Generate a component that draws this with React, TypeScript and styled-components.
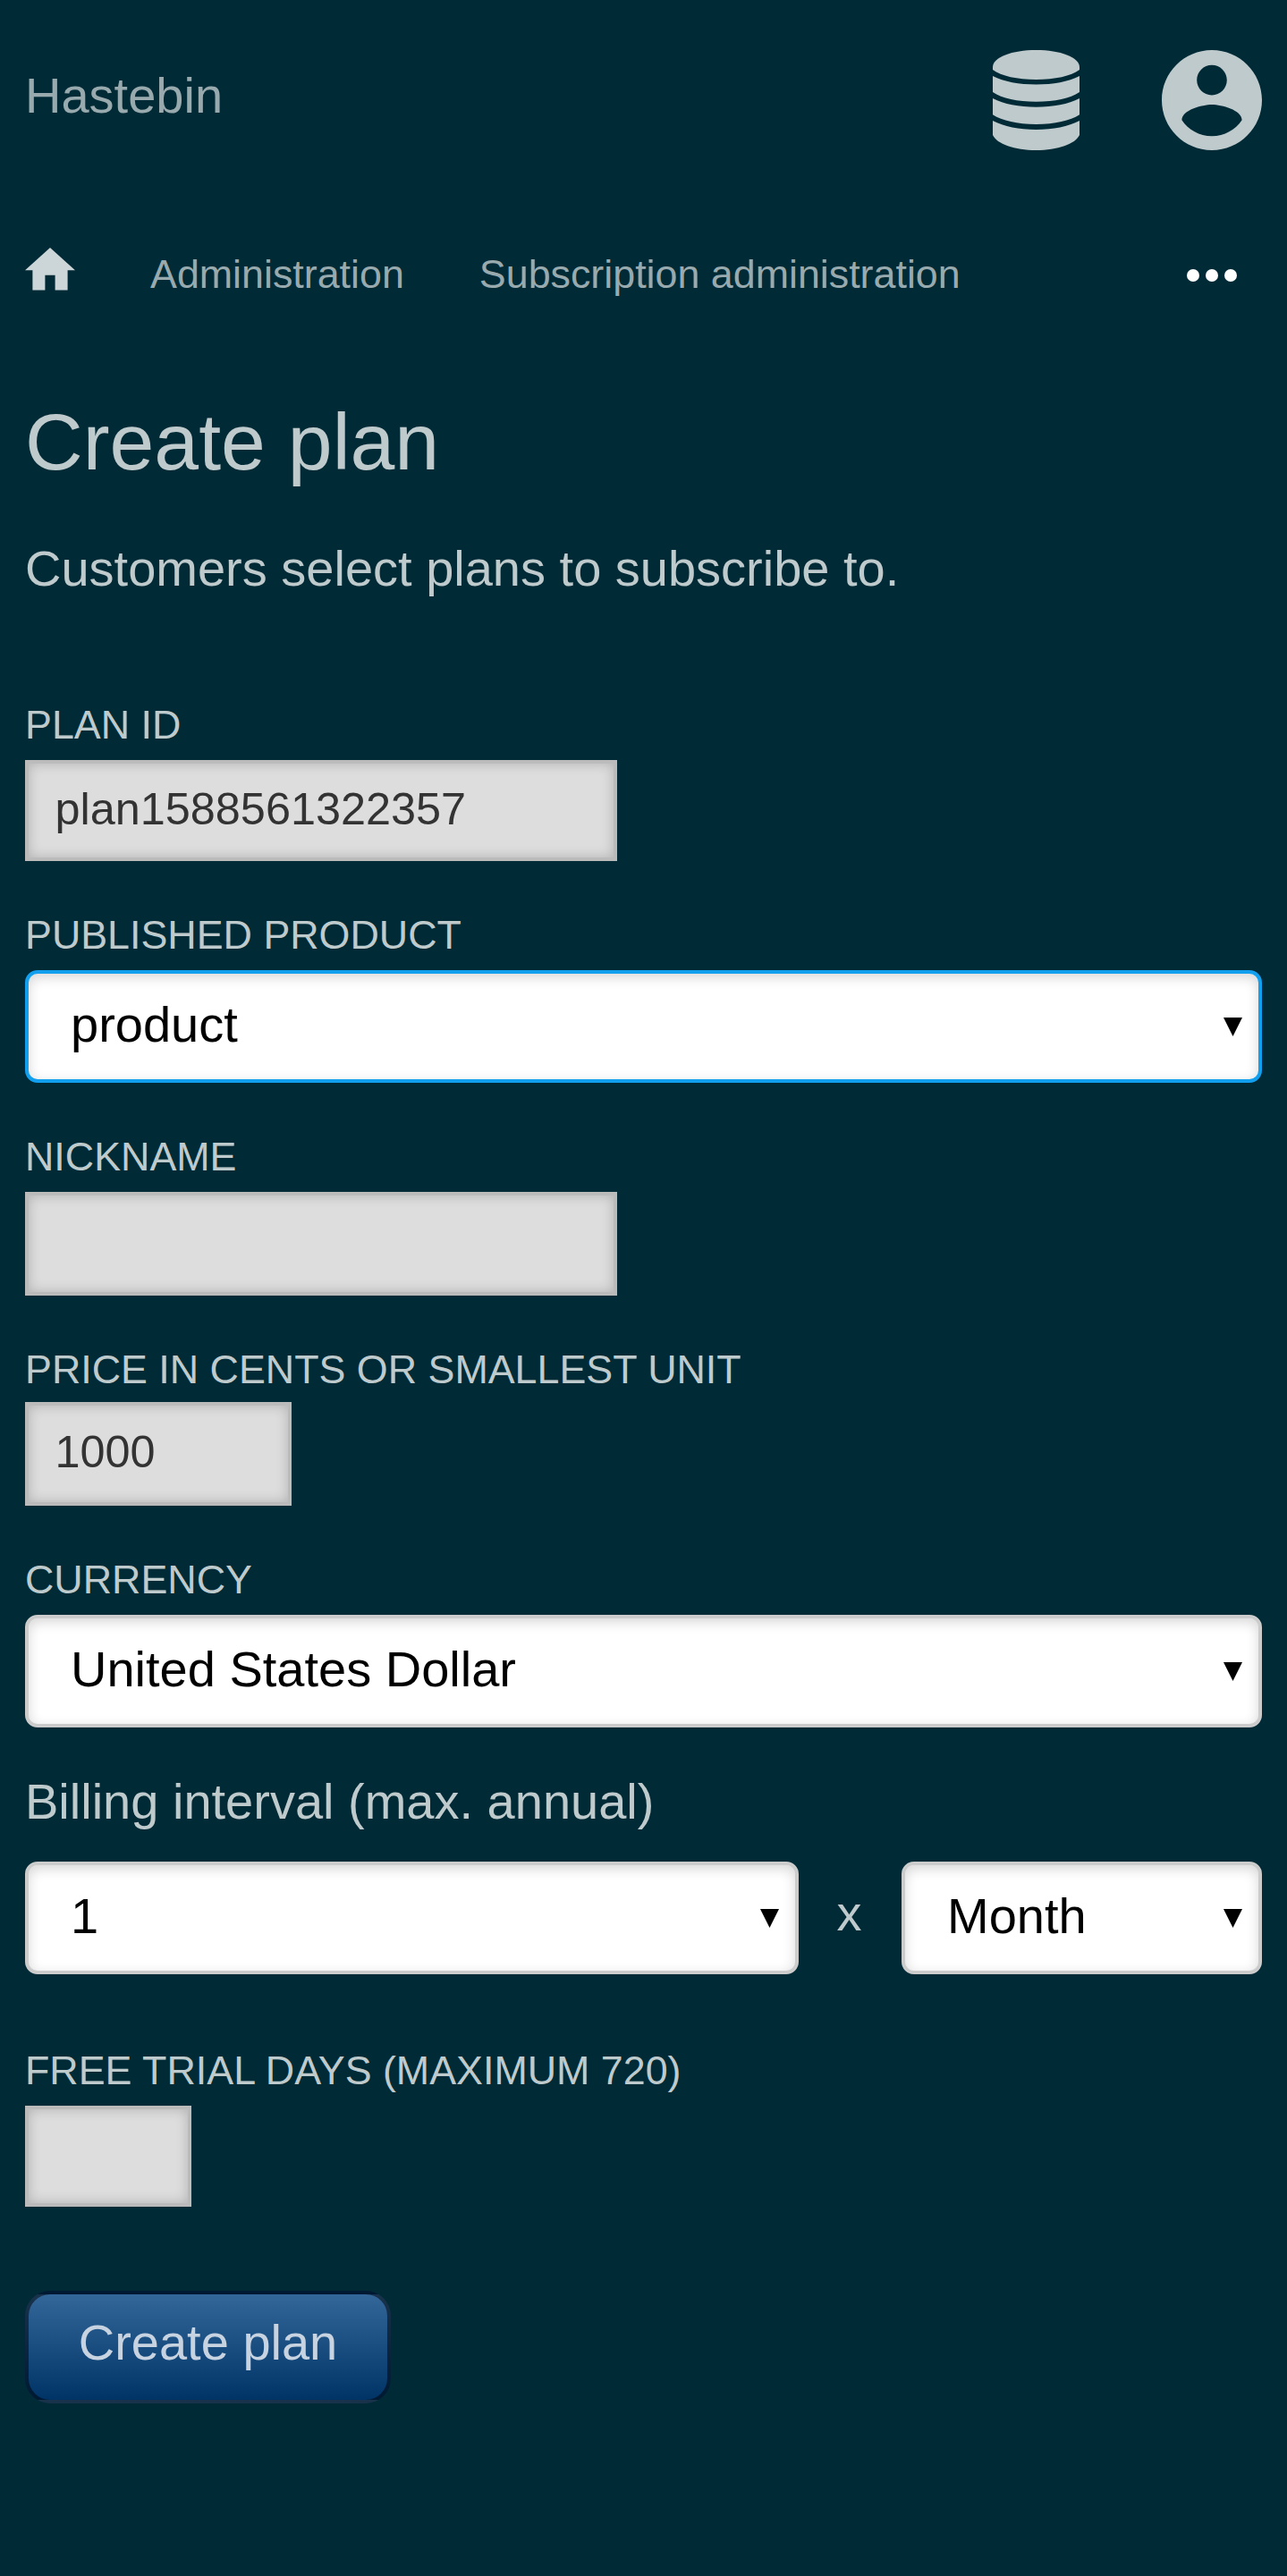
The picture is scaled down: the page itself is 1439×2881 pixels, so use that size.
import React from "react";
import styled, { createGlobalStyle, css } from "styled-components";

const GlobalStyle = createGlobalStyle`
  *, *::before, *::after { box-sizing: border-box; }
  html, body { margin: 0; background: #002b36; }
  body {
    min-height: 2881px;
    color: #bfcacd;
    font: 56px/64px "Liberation Sans", Arial, sans-serif;
  }
`;

const Page = styled.div`
  display: flex;
  flex-direction: column;
  padding: 56px 28px 0;
`;

const Header = styled.header`
  display: flex;
  justify-content: space-between;
  height: 112px;
`;

const Brand = styled.a`
  color: #99aaaf;
  line-height: 101px;
`;

const HeaderIcons = styled.div`
  display: flex;
  gap: 92px;
`;

const Icon = styled.svg<{ $color?: string }>`
  display: block;
  flex: none;
  fill: ${(p) => p.$color ?? "#bfcacd"};
`;

const Nav = styled.nav`
  display: flex;
  align-items: center;
  gap: 84px;
  height: 56px;
  margin-top: 110px;
  font-size: 44.8px;
`;

const HomeLink = styled.a`
  margin-bottom: 10px;
`;

const NavLink = styled.a`
  color: #99aaaf;
  line-height: 56px;
`;

const More = styled.a`
  margin: 4px 28px 0 auto;
`;

const Title = styled.h1`
  margin: 108px 0 0;
  font-size: 89.6px;
  font-weight: 400;
  line-height: 104px;
`;

const Intro = styled.p`
  margin: 58px 0 0;
`;

const Form = styled.form`
  display: flex;
  flex-direction: column;
  align-items: flex-start;
  margin-top: 115px;
`;

const Field = styled.div<{ $height: number }>`
  display: flex;
  flex-direction: column;
  align-self: stretch;
  height: ${(p) => p.$height}px;
`;

const Label = styled.label<{ $gap?: number }>`
  margin-bottom: ${(p) => p.$gap ?? 12}px;
  font-size: 44.8px;
  line-height: 55px;
  text-transform: uppercase;
`;

const TextInput = styled.input<{ $width: number; $height: number }>`
  width: ${(p) => p.$width}px;
  height: ${(p) => p.$height}px;
  margin: 0;
  padding: 0 29.5px 5px;
  border: 4px solid #bbb;
  border-radius: 0;
  outline: none;
  background: #ddd;
  box-shadow: inset 0 0 14px rgba(0, 0, 0, 0.2);
  color: #333;
  font: 50.4px "Liberation Sans", Arial, sans-serif;
`;

const SelectBox = styled.div<{ $focused?: boolean; $width?: number }>`
  display: flex;
  align-items: center;
  justify-content: space-between;
  height: 126px;
  padding: 0 18px 0 47px;
  border: 4px solid #ccc;
  border-radius: 14px;
  background: #fff;
  box-shadow: inset 0 4px 14px rgba(0, 0, 0, 0.16);
  color: #000;
  ${(p) => p.$width && css`width: ${p.$width}px;`}
  ${(p) => p.$focused && css`border-color: #119fee;`}
`;

const SelectValue = styled.span`
  margin-bottom: 4px;
`;

const Legend = styled.div`
  line-height: 64px;
`;

const IntervalRow = styled.div`
  display: flex;
  justify-content: space-between;
  align-self: stretch;
  margin: 35px 0 80px;
`;

const Times = styled.span`
  padding-right: 2px;
  line-height: 116px;
`;

const Submit = styled.button`
  width: 409px;
  height: 126px;
  margin: 0;
  padding: 0 0 12px;
  border: 4px solid rgba(0, 0, 0, 0.5);
  border-radius: 28px;
  background-image: linear-gradient(#369, #036);
  color: #c7d3e0;
  font: 56px "Liberation Sans", Arial, sans-serif;
`;

function Select({ value, focused, width }: { value: string; focused?: boolean; width?: number }) {
  return (
    <SelectBox $focused={focused} $width={width} role="combobox" tabIndex={0}>
      <SelectValue>{value}</SelectValue>
      <Icon $color="#000" width="21" height="21" viewBox="0 0 21 21">
        <path d="M0 0H21L10.5 21Z" />
      </Icon>
    </SelectBox>
  );
}

export default function App() {
  return (
    <>
      <GlobalStyle />
      <Page>
        <Header>
          <Brand>Hastebin</Brand>
          <HeaderIcons>
            <Icon width="97" height="112" viewBox="0 0 97 112">
              <path d="M0 19C0 8 21.500 0 48.500 0S97 8 97 19V22C87.500 29 69.500 33 48.500 33S9.500 29 0 22Z" />
              <path d="M0 29C12.500 35.500 29.500 38.500 48.500 38.500S84.500 35.500 97 29V47C86.500 54 69.500 57.800 48.500 57.800S10.500 54 0 47Z" />
              <path d="M0 54C12.500 60.500 29.500 63.700 48.500 63.700S84.500 60.500 97 54V72.300C86.500 79 69.500 83 48.500 83S10.500 79 0 72.300Z" />
              <path d="M0 79C12.500 85.500 29.500 89 48.500 89S84.500 85.500 97 79V95C92.500 105 72.500 112 48.500 112S4.500 105 0 95Z" />
            </Icon>
            <Icon width="112" height="112" viewBox="2 2 20 20">
              <path d="M12 2C6.480 2 2 6.480 2 12s4.480 10 10 10 10-4.480 10-10S17.520 2 12 2zm0 3c1.660 0 3 1.340 3 3s-1.340 3-3 3-3-1.340-3-3 1.340-3 3-3zm0 14.200c-2.500 0-4.710-1.280-6-3.220.030-1.990 4-3.080 6-3.080 1.990 0 5.970 1.090 6 3.080-1.290 1.940-3.500 3.220-6 3.220z" />
            </Icon>
          </HeaderIcons>
        </Header>
        <Nav>
          <HomeLink>
            <Icon $color="#ccd5d7" width="56" height="47.6" viewBox="2 3 20 17">
              <path d="M10 20v-6h4v6h5v-8h3L12 3 2 12h3v8z" />
            </Icon>
          </HomeLink>
          <NavLink>Administration</NavLink>
          <NavLink>Subscription administration</NavLink>
          <More>
            <Icon $color="#fff" width="56" height="14" viewBox="0 0 56 14">
              <circle cx="7" cy="7" r="7" />
              <circle cx="28" cy="7" r="7" />
              <circle cx="49" cy="7" r="7" />
            </Icon>
          </More>
        </Nav>
        <Title>Create plan</Title>
        <Intro>Customers select plans to subscribe to.</Intro>
        <Form>
          <Field $height={235}>
            <Label>Plan ID</Label>
            <TextInput $width={662} $height={113} defaultValue="plan1588561322357" />
          </Field>
          <Field $height={248}>
            <Label>Published product</Label>
            <Select value="product" focused />
          </Field>
          <Field $height={238}>
            <Label>Nickname</Label>
            <TextInput $width={662} $height={116} />
          </Field>
          <Field $height={235}>
            <Label $gap={9}>Price in cents or smallest unit</Label>
            <TextInput $width={298} $height={116} defaultValue="1000" />
          </Field>
          <Field $height={244}>
            <Label>Currency</Label>
            <Select value="United States Dollar" />
          </Field>
          <Legend>Billing interval (max. annual)</Legend>
          <IntervalRow>
            <Select value="1" width={865} />
            <Times>x</Times>
            <Select value="Month" width={403} />
          </IntervalRow>
          <Field $height={274}>
            <Label>Free trial days (maximum 720)</Label>
            <TextInput $width={186} $height={113} />
          </Field>
          <Submit type="button">Create plan</Submit>
        </Form>
      </Page>
    </>
  );
}
